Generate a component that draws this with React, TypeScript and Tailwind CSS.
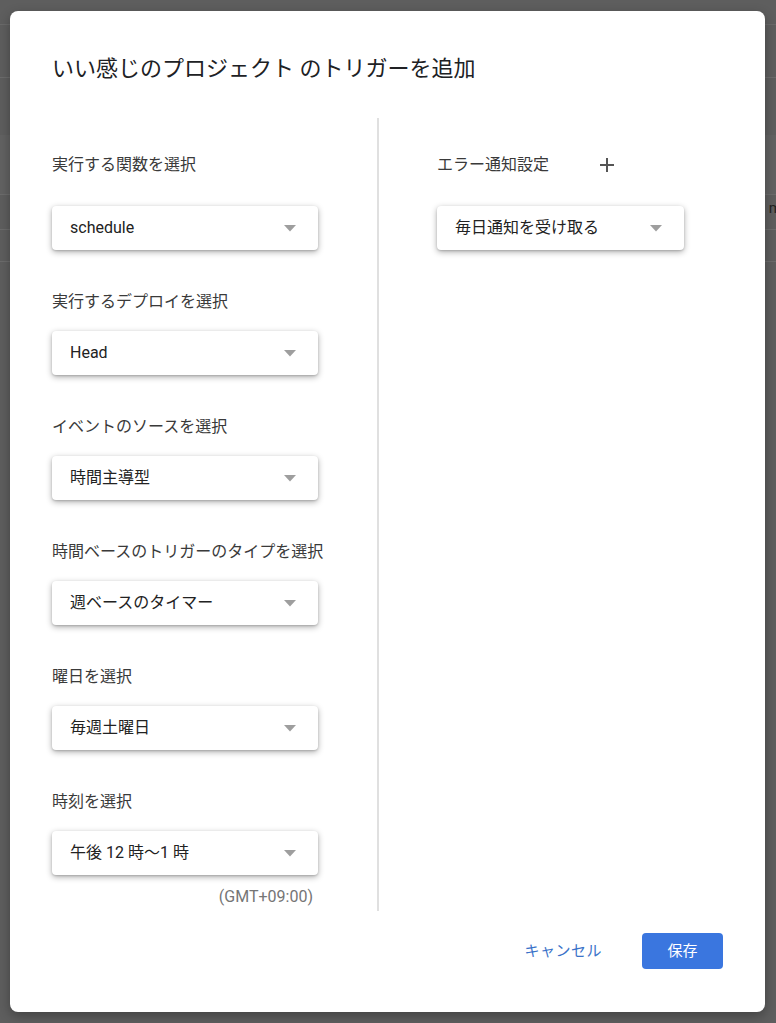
import React from "react";

const font = { fontFamily: "Roboto, 'Noto Sans CJK JP', 'Noto Sans', sans-serif" };

function Arrow() {
  return (
    <svg width="12" height="7" viewBox="0 0 12 7" className="shrink-0">
      <path d="M0 0 L12 0 L6 6.5 Z" fill="#9e9e9e" />
    </svg>
  );
}

function Select({ value, width }: { value: string; width: string }) {
  return (
    <div
      className={`${width} h-[44px] rounded-[4px] bg-white flex items-center justify-between pl-[18px] pr-[22px] shadow-[0_2px_6px_rgba(0,0,0,0.32),0_1px_2px_rgba(0,0,0,0.15)]`}
    >
      <span className="text-[16px] text-[#222] leading-[24px]">{value}</span>
      <Arrow />
    </div>
  );
}

function Group({ label, value, first }: { label: string; value: string; first?: boolean }) {
  return (
    <div className={first ? "" : "mt-[40px]"}>
      <div className="text-[16px] leading-[24px] text-[#3a3a3a]">{label}</div>
      <div className={first ? "mt-[29px]" : "mt-[17px]"}>
        <Select value={value} width="w-[266px]" />
      </div>
    </div>
  );
}

export default function App() {
  return (
    <div className="relative w-[776px] h-[1023px] bg-[#5e5e5e] overflow-hidden" style={font}>
      {/* underlying page */}
      <div className="flex flex-col">
        <div className="h-[25px] border-b border-[#6a6a6a]" />
        <div className="h-[53px] border-b border-[#6c6c6c]" />
        <div className="h-[57px]" />
        <div className="h-[60px] bg-[#626262] border-b border-[#6c6c6c]" />
        <div className="h-[35px] border-b border-[#6c6c6c] flex justify-end items-start">
          <span className="text-[15px] text-[#222] -mr-[6px] mt-[2px]">m</span>
        </div>
        <div className="h-[32px] border-b border-[#6c6c6c]" />
      </div>

      {/* dialog */}
      <div className="absolute left-[10px] top-[11px] w-[755px] h-[1001px] bg-white rounded-[8px] flex flex-col shadow-[0_4px_12px_rgba(0,0,0,0.3)]">
        <div className="pl-[42px] pt-[42px] text-[22px] leading-[32px] text-[#202124]">
          いい感じのプロジェクト のトリガーを追加
        </div>
        <div className="mt-[33px] h-[793px] flex pl-[42px]">
          <div className="w-[325px] pt-[35px] flex flex-col">
            <Group first label="実行する関数を選択" value="schedule" />
            <Group label="実行するデプロイを選択" value="Head" />
            <Group label="イベントのソースを選択" value="時間主導型" />
            <Group label="時間ベースのトリガーのタイプを選択" value="週ベースのタイマー" />
            <Group label="曜日を選択" value="毎週土曜日" />
            <Group label="時刻を選択" value="午後 12 時〜1 時" />
            <div className="w-[266px] mt-[10px] pr-[5px] text-right text-[16px] leading-[24px] text-[#757575]">
              (GMT+09:00)
            </div>
          </div>
          <div className="w-[2px] bg-[#e0e0e0]" />
          <div className="pl-[58px] pt-[35px] flex flex-col">
            <div className="flex items-center h-[24px]">
              <span className="text-[16px] leading-[24px] text-[#3a3a3a]">エラー通知設定</span>
              <svg width="16" height="16" viewBox="0 0 16 16" className="ml-[50px]">
                <path d="M8 1 V15 M1 8 H15" stroke="#555" strokeWidth="2" />
              </svg>
            </div>
            <div className="mt-[29px]">
              <Select value="毎日通知を受け取る" width="w-[247px]" />
            </div>
          </div>
        </div>
        <div className="mt-[22px] flex justify-end items-center pr-[42px]">
          <span className="text-[15px] text-[#3b73c9] tracking-[0.5px] mr-[40px]">キャンセル</span>
          <div className="w-[81px] h-[36px] rounded-[4px] bg-[#3a76df] text-white text-[15px] flex items-center justify-center">
            保存
          </div>
        </div>
      </div>
    </div>
  );
}
